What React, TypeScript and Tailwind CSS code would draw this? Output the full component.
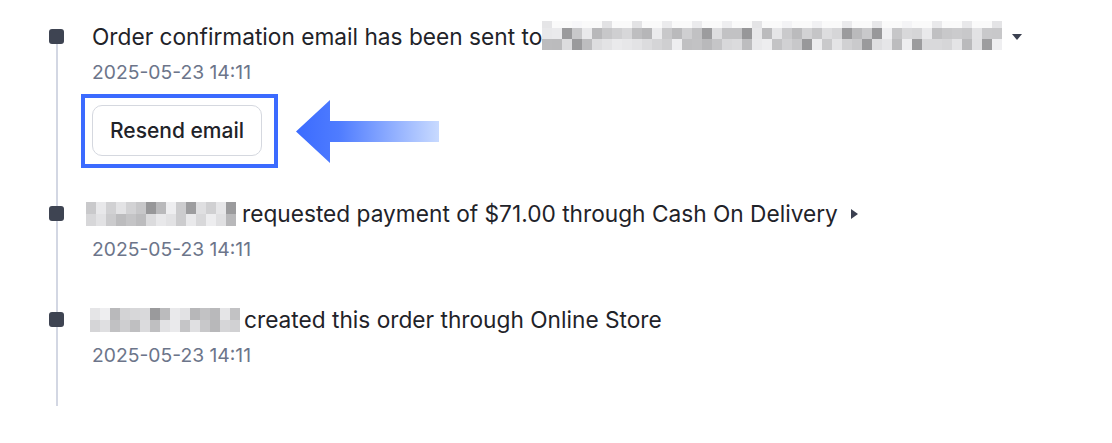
import React from "react"

// deterministic grays for the pixelated (redacted) parts
function makeGrays(count: number, seed: number, light = false) {
  const out: string[] = []
  let s = seed
  for (let i = 0; i < count; i++) {
    s = (s * 9301 + 49297) % 233280
    const r = s / 233280
    let v = light ? 225 + Math.floor(r * 25) : 175 + Math.floor(r * 65)
    if (!light && r < 0.12) v = 150 + Math.floor(r * 60)
    out.push(`rgb(${v},${v},${v + 2})`)
  }
  return out
}

function Pixelated({
  cols,
  rows,
  cw,
  ch,
  seed,
  lightTop = false,
  className = "",
}: {
  cols: number
  rows: number
  cw: number
  ch: number
  seed: number
  lightTop?: boolean
  className?: string
}) {
  const cells = makeGrays(cols * rows, seed)
  const top = makeGrays(cols, seed + 7, true)
  return (
    <div className={`flex flex-col shrink-0 ${className}`}>
      {lightTop && (
        <div className="flex">
          {top.map((c, i) => (
            <div key={i} style={{ width: cw, height: 7, background: i % 3 === 0 ? c : "#fafafa" }} />
          ))}
        </div>
      )}
      {Array.from({ length: rows }).map((_, r) => (
        <div key={r} className="flex">
          {cells.slice(r * cols, r * cols + cols).map((c, i) => (
            <div key={i} style={{ width: cw, height: ch, background: c }} />
          ))}
        </div>
      ))}
    </div>
  )
}

function Bullet({ first }: { first?: boolean }) {
  return (
    <div className="flex flex-col items-center w-[15px] shrink-0">
      <div className={`h-[6px] w-[2px] ${first ? "bg-transparent" : "bg-[#d3d7e3]"}`} />
      <div className="h-[15px] w-[15px] rounded-[3px] bg-[#3e4452]" />
      <div className="flex-1 w-[2px] bg-[#d3d7e3]" />
    </div>
  )
}

function CaretDown() {
  return (
    <svg width="10" height="6" viewBox="0 0 10 6" className="ml-[10px] shrink-0">
      <path d="M0 0h10L5 6z" fill="#3b4050" />
    </svg>
  )
}

function CaretRight() {
  return (
    <svg width="7" height="10" viewBox="0 0 7 10" className="ml-[13px] shrink-0">
      <path d="M0 0l7 5-7 5z" fill="#3b4050" />
    </svg>
  )
}

function ArrowLeft() {
  return (
    <svg width="143" height="63" viewBox="0 0 143 63" className="ml-[18px] shrink-0">
      <defs>
        <linearGradient id="arr" x1="0" y1="0" x2="1" y2="0">
          <stop offset="0" stopColor="#3b6bff" />
          <stop offset="0.3" stopColor="#4f7cff" />
          <stop offset="1" stopColor="#c8daff" />
        </linearGradient>
      </defs>
      <path d="M0 31.5L34 0v21h109v21H34v21z" fill="url(#arr)" />
    </svg>
  )
}

const Stamp = () => (
  <div className="mt-[9px] text-[19.3px] leading-[24px] text-[#6c758a]">2025-05-23 14:11</div>
)

export default function App() {
  return (
    <div className="w-[1112px] h-[443px] bg-white pl-[49px] pt-[23px] font-['Inter',sans-serif] text-[#1f2329] overflow-hidden">
      {/* email sent */}
      <div className="flex">
        <Bullet first />
        <div className="ml-[28px] pb-[32px]">
          <div className="flex items-center h-[28px] text-[22.7px] leading-[28px]">
            <span className="whitespace-nowrap">Order confirmation email has been sent to</span>
            <Pixelated cols={46} rows={2} cw={10} ch={11} seed={17} lightTop className="-mt-[4px]" />
            <CaretDown />
          </div>
          <Stamp />
          <div className="flex items-center mt-[10px] -ml-[11px]">
            <div className="border-[4px] border-[#3b6bff] pl-[7px] pr-[12px] pt-[7px] pb-[8px]">
              <button className="h-[51px] px-[17px] rounded-[10px] border-[1.5px] border-[#d5d8df] bg-white text-[21px] font-medium text-[#1f2329]">
                Resend email
              </button>
            </div>
            <ArrowLeft />
          </div>
        </div>
      </div>

      {/* payment request */}
      <div className="flex">
        <Bullet />
        <div className="ml-[28px] pb-[45px]">
          <div className="flex items-center h-[28px] text-[22.7px] leading-[28px]">
            <Pixelated cols={15} rows={2} cw={10} ch={12} seed={5} className="-ml-[6px] mr-[6px]" />
            <span className="whitespace-nowrap">requested payment of $71.00 through Cash On Delivery</span>
            <CaretRight />
          </div>
          <Stamp />
        </div>
      </div>

      {/* order created */}
      <div className="flex">
        <Bullet />
        <div className="ml-[28px] pb-[39px]">
          <div className="flex items-center h-[28px] text-[22.7px] leading-[28px]">
            <Pixelated cols={15} rows={2} cw={10} ch={12} seed={41} className="-ml-[2px] mr-[4px]" />
            <span className="whitespace-nowrap">created this order through Online Store</span>
          </div>
          <Stamp />
        </div>
      </div>
    </div>
  )
}
